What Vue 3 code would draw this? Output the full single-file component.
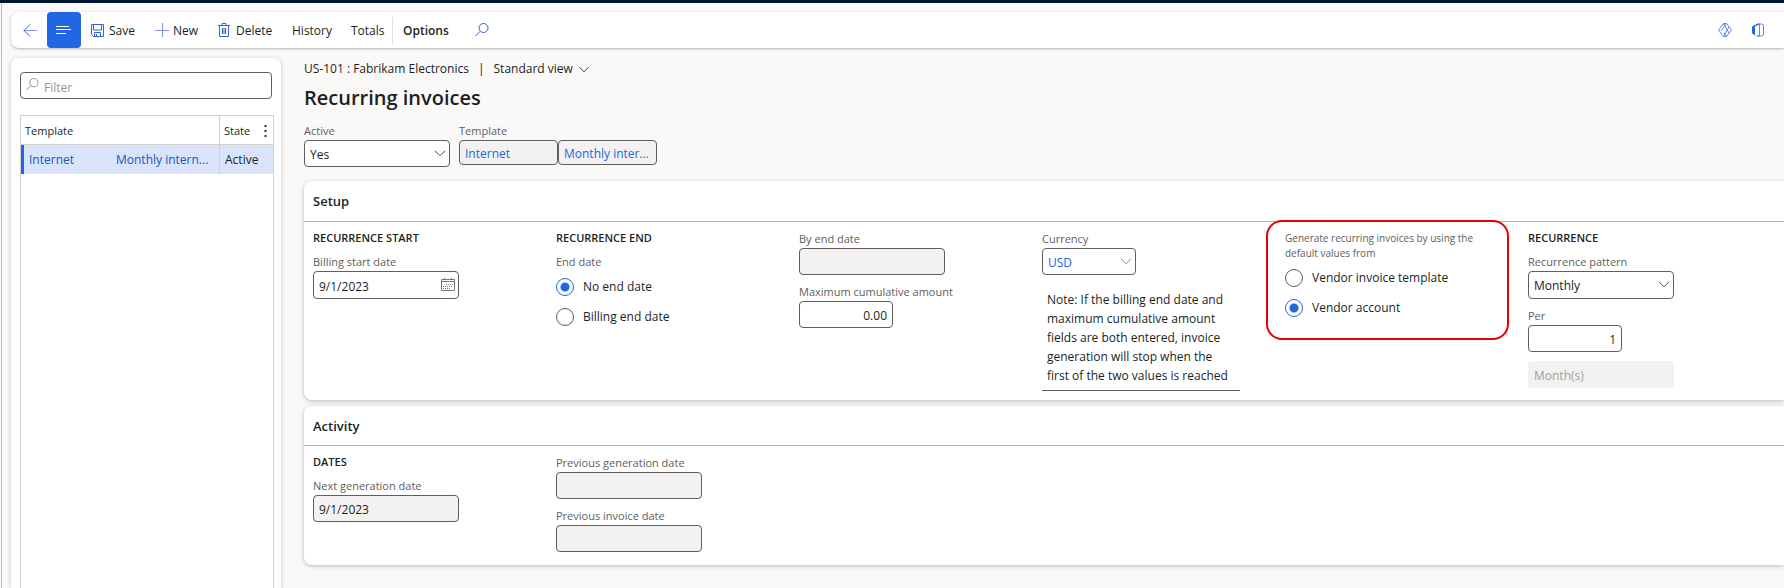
<script setup>
import { ref } from 'vue'

const filter = ref('')
const active = ref('Yes')
const startDate = ref('9/1/2023')
const endMode = ref('none')
const maxAmount = ref('0.00')
const currency = ref('USD')
const source = ref('account')
const pattern = ref('Monthly')
const per = ref('1')
const note = `Note: If the billing end date and
maximum cumulative amount
fields are both entered, invoice
generation will stop when the
first of the two values is reached`
</script>

<template>
  <div class="page">
    <div class="topbar"></div>
    <div class="frame">
      <header class="toolbar">
        <button class="tool back" aria-label="Back">
          <svg width="14" height="14" viewBox="0 0 14 14"><path class="soft" d="M14 7.500H1" /><path d="M7 1.500L1 7.500l6 6" /></svg>
        </button>
        <button class="tool list" aria-label="Show list">
          <svg width="16" height="12" viewBox="0 0 16 12"><path d="M0 2.500h13M0 5.500h15M0 9.500h10" /></svg>
        </button>
        <button class="tool save">
          <svg width="13" height="13" viewBox="0 0 13 13"><path d="M.5.500h12v12h-10l-2-2zM2.500.500v5.500h8v-5.500M3.500 12.500v-4h6v4M5.500 10v2.500" /></svg>
          <span>Save</span>
        </button>
        <button class="tool new">
          <svg width="14" height="14" viewBox="0 0 14 14"><path class="soft" d="M7.500 0v14M0 7.500h14" /></svg>
          <span>New</span>
        </button>
        <button class="tool delete">
          <svg width="12" height="14" viewBox="0 0 12 14"><path d="M0 2.500h12M4 2.500v-2h4v2M1.500 2.500v11h9v-11M4.500 5v6M6 5v6M7.500 5v6" /></svg>
          <span>Delete</span>
        </button>
        <button class="tool history"><span>History</span></button>
        <button class="tool totals"><span>Totals</span></button>
        <button class="tool options"><span>Options</span></button>
        <button class="tool" aria-label="Search">
          <svg width="14" height="14" viewBox="0 0 14 14"><circle cx="8.500" cy="5" r="4.500" /><path d="M5.300 8.200L.5 13" /></svg>
        </button>
        <div class="right">
          <button class="tool" aria-label="Power Apps">
            <svg class="thin" width="14" height="14" viewBox="0 0 14 14"><path d="M5.500.500h3l5 6.500-5 6.500h-3L.5 7zM5.500.500L11 10M8.500.500L3.200 7.500M5.500 13.500L11 4M8.500 13.500L5.800 9.500" /></svg>
          </button>
          <button class="tool" aria-label="Open in Microsoft Office">
            <svg width="12" height="14" viewBox="0 0 12 14"><path class="fill" d="M7 0L1.500 2.500 0 4v6l1.500 1.500L7 14v-1.500H3V3l4-1z" /><path class="thin" d="M6 1h3.500l2 1v10l-2 1H6M7.500 1v12" /></svg>
          </button>
        </div>
      </header>

      <div class="content">
        <aside class="side">
          <label class="filter">
            <svg width="13" height="13" viewBox="0 0 14 14"><circle cx="8.500" cy="5" r="4.500" /><path d="M5.300 8.200L.5 13" /></svg>
            <input v-model="filter" type="text" placeholder="Filter" aria-label="Filter" />
          </label>
          <div class="grid">
            <table>
              <colgroup><col class="c1" /><col class="c2" /><col /></colgroup>
              <thead>
                <tr>
                  <th colspan="2">Template</th>
                  <th class="state">
                    <span class="statehead">State
                      <button class="more" aria-label="Grid options"><svg width="3" height="12" viewBox="0 0 3 12"><path d="M.5 0h2v2h-2zM.5 5h2v2h-2zM.5 10h2v2h-2z" /></svg></button>
                    </span>
                  </th>
                </tr>
              </thead>
              <tbody>
                <tr>
                  <td class="name"><a href="#">Internet</a></td>
                  <td class="desc"><a href="#">Monthly intern...</a></td>
                  <td class="state">Active</td>
                </tr>
              </tbody>
            </table>
          </div>
        </aside>

        <main>
          <div class="crumb">
            <span>US-101 : Fabrikam Electronics</span>
            <span class="bar">|</span>
            <button class="view">Standard view
              <svg width="12" height="7" viewBox="0 0 12 7"><path d="M1 .8l5 5 5-5" /></svg>
            </button>
          </div>
          <h1>Recurring invoices</h1>
          <div class="head">
            <div class="field">
              <label for="active">Active</label>
              <div class="select">
                <select id="active" v-model="active"><option>Yes</option><option>No</option></select>
                <svg width="12" height="7" viewBox="0 0 12 7"><path d="M1 .8l5 5 5-5" /></svg>
              </div>
            </div>
            <div class="field">
              <label for="tpl">Template</label>
              <div class="pair">
                <input id="tpl" class="link" value="Internet" readonly />
                <input class="link" value="Monthly internet service" aria-label="Template description" readonly />
              </div>
            </div>
          </div>

          <section class="card">
            <h2>Setup</h2>
            <div class="cols">
              <div class="col">
                <h3>RECURRENCE START</h3>
                <div class="field">
                  <label for="start">Billing start date</label>
                  <div class="select">
                    <input id="start" v-model="startDate" class="tall" />
                    <svg class="cal" width="14" height="13" viewBox="0 0 14 13"><path d="M.5 1.500h13v11H.5zM.5 3.500h13M3.500 0v2M10.500 0v2" /><path class="dots" d="M5 6.500h7M2 8.500h10M2 10.500h7" /></svg>
                  </div>
                </div>
              </div>
              <div class="col">
                <h3>RECURRENCE END</h3>
                <fieldset>
                  <legend>End date</legend>
                  <label class="radio"><input v-model="endMode" type="radio" value="none" />No end date</label>
                  <label class="radio"><input v-model="endMode" type="radio" value="billing" />Billing end date</label>
                </fieldset>
              </div>
              <div class="col">
                <div class="field">
                  <label for="byend">By end date</label>
                  <input id="byend" readonly />
                </div>
                <div class="field">
                  <label for="max">Maximum cumulative amount</label>
                  <input id="max" v-model="maxAmount" class="num" />
                </div>
              </div>
              <div class="col">
                <div class="field">
                  <label for="cur">Currency</label>
                  <div class="select short">
                    <select id="cur" v-model="currency" class="link"><option>USD</option><option>EUR</option></select>
                    <svg class="light" width="12" height="7" viewBox="0 0 12 7"><path d="M1 .8l5 5 5-5" /></svg>
                  </div>
                </div>
                <textarea :value="note" aria-label="Note" rows="5" readonly></textarea>
              </div>
              <div class="col">
                <fieldset class="marked">
                  <legend>Generate recurring invoices by using the default values from</legend>
                  <label class="radio"><input v-model="source" type="radio" value="template" />Vendor invoice template</label>
                  <label class="radio"><input v-model="source" type="radio" value="account" />Vendor account</label>
                </fieldset>
              </div>
              <div class="col">
                <h3>RECURRENCE</h3>
                <div class="field">
                  <label for="pat">Recurrence pattern</label>
                  <div class="select">
                    <select id="pat" v-model="pattern" class="tall"><option>Monthly</option><option>Weekly</option></select>
                    <svg width="12" height="7" viewBox="0 0 12 7"><path d="M1 .8l5 5 5-5" /></svg>
                  </div>
                </div>
                <div class="field">
                  <label for="per">Per</label>
                  <input id="per" v-model="per" class="num" />
                </div>
                <input value="Month(s)" aria-label="Period unit" disabled />
              </div>
            </div>
          </section>

          <section class="card activity">
            <h2>Activity</h2>
            <div class="cols">
              <div class="col">
                <h3>DATES</h3>
                <div class="field">
                  <label for="next">Next generation date</label>
                  <input id="next" value="9/1/2023" readonly />
                </div>
              </div>
              <div class="col">
                <div class="field">
                  <label for="prevgen">Previous generation date</label>
                  <input id="prevgen" readonly />
                </div>
                <div class="field">
                  <label for="previnv">Previous invoice date</label>
                  <input id="previnv" readonly />
                </div>
              </div>
            </div>
          </section>
        </main>
      </div>
    </div>
  </div>
</template>

<style>
body {
  margin: 0;
  background: #faf9f8;
}
</style>

<style scoped>
.page {
  display: flex;
  flex-direction: column;
  box-sizing: border-box;
  height: 100vh;
  overflow: hidden;
  background: #faf9f8;
  color: #201f1e;
  font: 12px/16px "Open Sans", "Noto Sans", sans-serif;
}
.page * { box-sizing: border-box; }
.topbar { flex: none; height: 3px; background: #001433; }
.frame {
  flex: 1;
  display: flex;
  flex-direction: column;
  min-height: 0;
  margin-left: 1px;
  border-left: 1px solid #bebbb8;
}
button, input, select, textarea { font: inherit; color: inherit; }
button { display: flex; align-items: center; padding: 0; border: 0; background: none; }
svg { flex: none; fill: none; stroke: #2f62e0; stroke-width: 1; }
.soft { stroke: #7f95e8; }
.thin { stroke: #5f84ea; }
.toolbar {
  flex: none;
  display: flex;
  align-items: center;
  height: 36px;
  margin: 9px 0 0 9px;
  border-radius: 8px 0 0 8px;
  background: #fff;
  box-shadow: 0 1px 3px rgba(0, 0, 0, 0.28);
}
.tool { height: 36px; white-space: nowrap; }
.tool span { padding-top: 2px; }
.back { width: 36px; padding-left: 12px; }
.list { width: 34px; justify-content: center; border-radius: 4px; background: #2266e3; }
.list svg { stroke: #fff; }
.save { width: 74px; padding-left: 10px; gap: 5px; }
.new { width: 63px; gap: 4px; }
.delete { width: 74px; gap: 6px; }
.history { width: 59px; }
.totals { width: 42px; height: 27px; border-right: 1px solid #e1dfdd; }
.options { width: 82px; padding-left: 10px; font-weight: 600; }
.right { display: flex; gap: 20px; margin-left: auto; padding-right: 20px; }
.fill { fill: #2266e3; stroke: none; }

.content {
  flex: 1;
  display: grid;
  grid-template-columns: 270px minmax(0, 1fr);
  gap: 23px;
  min-height: 0;
  padding: 10px 0 0 9px;
}
.side {
  display: flex;
  flex-direction: column;
  padding: 14px 7px 0 9px;
  border-radius: 8px 8px 0 0;
  background: #fff;
  box-shadow: 0 1px 5px rgba(0, 0, 0, 0.22);
}
.filter {
  display: flex;
  gap: 5px;
  height: 27px;
  margin-right: 2px;
  padding: 5px;
  border: 1px solid #605e5c;
  border-radius: 4px;
}
.filter svg { stroke: #8a8886; }
.filter input { width: 100%; height: 17px; padding: 1px 0 0; border: 0; outline: 0; background: none; }
.filter input::placeholder { color: #979593; }
.grid { flex: 1; margin-top: 16px; border: 1px solid #d2d0ce; border-bottom: 0; }
table { width: 100%; table-layout: fixed; border-collapse: separate; border-spacing: 0; }
.c1 { width: 95px; }
.c2 { width: 103px; }
th { height: 29px; padding: 2px 4px 0; border-bottom: 1px solid #d2d0ce; font-size: 11px; font-weight: 400; text-align: left; }
.state { border-left: 1px solid #d2d0ce; }
.statehead { display: flex; justify-content: space-between; }
.more { padding-right: 2px; }
.more svg { fill: #323130; stroke: none; }
td { height: 29px; padding: 1px 5px 0; background: #d9e4fb; white-space: nowrap; }
td a { color: #2155b8; text-decoration: none; }
.name { border-left: 3px solid #2266e3; }
.desc { padding-right: 0; padding-left: 0; }

main { padding-top: 3px; }
.crumb { display: flex; line-height: 16px; }
.bar { margin: 0 9px; }
.view { gap: 5px; }
.view svg, .select svg { stroke: #494745; }
h1 { margin: 7px 0 11px; font-size: 20px; line-height: 28px; font-weight: 600; }
.head { display: flex; gap: 9px; height: 58px; }
.field { display: flex; flex-direction: column; gap: 1px; }
.field > label, legend { color: #605e5c; font-size: 11px; line-height: 16px; white-space: nowrap; }
input, select {
  width: 146px;
  height: 27px;
  padding: 2px 5px 0;
  border: 1px solid #605e5c;
  border-radius: 4px;
  outline: 0;
  background: #fff;
}
select { display: block; appearance: none; }
.select { position: relative; width: 146px; }
.select svg { position: absolute; top: 10px; right: 4px; pointer-events: none; }
.select .light { stroke: #8a8886; }
.select .cal { top: 7px; stroke: #797775; }
.dots { stroke-dasharray: 1 1; }
.tall { height: 28px; }
.short, .short select, .num { width: 94px; }
.num { text-align: right; }
.link { color: #2266e3; }
input:read-only { background: #f3f2f1; }
input[type="radio"] { background: #fff; }
.filter input { background: none; }
input:disabled { border: 0; background: #f3f2f1; color: #a19f9d; opacity: 1; padding-left: 6px; }
.pair { display: flex; }
.pair input { width: 99px; height: 25px; text-overflow: ellipsis; }

.card {
  border-radius: 8px 0 0 8px;
  background: #fff;
  box-shadow: 0 1px 4px rgba(0, 0, 0, 0.26);
}
h2 { margin: 0; padding: 1px 9px 0; border-bottom: 1px solid #b3b0ad; font-size: 13px; line-height: 39px; font-weight: 600; }
.activity { margin-top: 6px; }
.activity h2 { line-height: 38px; }
.cols { display: grid; grid-template-columns: repeat(6, 243px); padding: 9px; }
.activity .cols { padding-bottom: 13px; }
.col { display: flex; flex-direction: column; gap: 9px; }
h3 { margin: 0; font-size: 11px; line-height: 14px; font-weight: 600; }
fieldset { display: flex; flex-direction: column; min-width: 0; margin: 0; padding: 0; border: 0; }
legend { margin-bottom: 8px; padding: 0; }
.radio { display: flex; align-items: center; gap: 9px; height: 18px; margin-bottom: 12px; white-space: nowrap; }
.radio input { appearance: none; width: 18px; height: 18px; margin: 0; padding: 0; border-radius: 50%; }
.radio input:checked { border-color: #2266e3; background: radial-gradient(circle, #2266e3 4px, #fff 5px); }
.marked {
  width: 243px;
  height: 120px;
  margin: -11px 0 0 -19px;
  padding: 9px 17px;
  border: 2px solid #e60000;
  border-radius: 16px;
}
.marked legend { float: left; width: 205px; line-height: 15px; font-size: 10px; white-space: normal; }
textarea {
  width: 198px;
  height: 107px;
  padding: 6px 0 5px 5px;
  border: 0;
  border-bottom: 1px solid #605e5c;
  outline: 0;
  resize: none;
  overflow: hidden;
  background: none;
  line-height: 19px;
  white-space: pre;
}
</style>
